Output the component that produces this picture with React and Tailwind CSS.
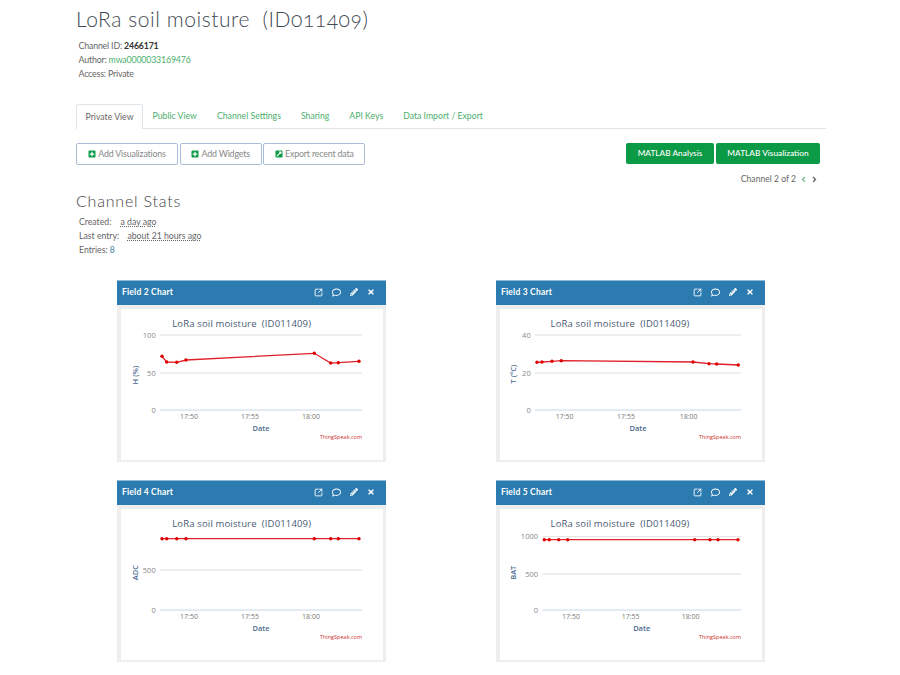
import React from 'react';
import { SquareArrowOutUpRight } from 'lucide-react';
import {
    FaExternalLinkSquareAlt,
    FaPlusSquare,
    FaRegComment,
    FaPencilAlt,
    FaTimes,
    FaAngleLeft,
    FaAngleRight,
} from 'react-icons/fa';

const TITLE = 'LoRa soil moisture\u00a0\u00a0(ID011409)';
const X_LEFT = [41, 45.7, 55.7, 65, 193.3, 209.7, 217.3, 238];

const charts = [
    {
        name: 'Field 2 Chart',
        yTitle: 'H (%)',
        yTitleX: 14.7,
        yTitleY: 66,
        left: 39,
        labelX: 34.7,
        grid: [[26, '100'], [64, '50'], [101, '0']],
        points: [[41, 47.3], [45.7, 53], [55.7, 53.3], [65, 51], [193.3, 44.3], [209.7, 54], [217.3, 53.7], [238, 52.3]],
        ticks: [68, 129, 190],
        dateX: 140,
        titleX: 120.7,
    },
    {
        name: 'Field 3 Chart',
        yTitle: 'T (\u00b0C)',
        yTitleX: 14,
        yTitleY: 65,
        left: 35,
        labelX: 30.7,
        grid: [[26, '40'], [64, '20'], [101, '0']],
        points: [[37, 53.3], [42, 53], [52, 52.3], [61.3, 51.7], [193, 53], [209, 54.7], [216.7, 55], [238.3, 56]],
        ticks: [64.7, 126, 188.7],
        dateX: 138,
        titleX: 120,
    },
    {
        name: 'Field 4 Chart',
        yTitle: 'ADC',
        yTitleX: 14.7,
        yTitleY: 63.7,
        left: 39,
        labelX: 34.7,
        grid: [[61, '500'], [101, '0']],
        points: X_LEFT.map((x) => [x, 29.7]),
        ticks: [68, 129, 190],
        dateX: 140,
        titleX: 120.7,
    },
    {
        name: 'Field 5 Chart',
        yTitle: 'BAT',
        yTitleX: 14,
        yTitleY: 63.7,
        left: 42.7,
        labelX: 38,
        grid: [[27.7, '1000'], [65, '500'], [101, '0']],
        points: [44.3, 49.3, 58.7, 67.7, 194.7, 210, 218, 238].map((x) => [x, 30.7]),
        ticks: [71, 130.7, 190.7],
        dateX: 141.7,
        titleX: 120,
    },
];

const tabs = ['Public View', 'Channel Settings', 'Sharing', 'API Keys', 'Data Import / Export'];

const ChartPlot = ({ chart }) => (
    <svg viewBox="0 0 262 151" className="block w-[262px] h-[151px]" style={{ fontFamily: '"Open Sans", sans-serif' }}>
        <text x={chart.titleX} y="17.5" textAnchor="middle" fontSize="9.5" letterSpacing="0.15" fill="#4a5a75">
            {TITLE}
        </text>
        {chart.grid.map(([y, label]) => (
            <g key={label}>
                <line x1={chart.left} x2="241" y1={y} y2={y} stroke={label === '0' ? '#c6d6e8' : '#dedede'} strokeWidth="1" />
                <text x={chart.labelX} y={y + 2.5} textAnchor="end" fontSize="7.5" fill="#888">{label}</text>
            </g>
        ))}
        {chart.ticks.map((x, i) => (
            <text key={x} x={x} y="109.5" textAnchor="middle" fontSize="7" fill="#777">
                {['17:50', '17:55', '18:00'][i]}
            </text>
        ))}
        <text x={chart.dateX} y="121.5" textAnchor="middle" fontSize="7.5" fontWeight="600" fill="#4d6a92">Date</text>
        <text
            x={chart.yTitleX}
            y={chart.yTitleY}
            textAnchor="middle"
            fontSize="7.5"
            fontWeight="600"
            fill="#4d6a92"
            transform={`rotate(-90 ${chart.yTitleX} ${chart.yTitleY})`}
            dominantBaseline="middle"
        >
            {chart.yTitle}
        </text>
        <text x="241" y="130" textAnchor="end" fontSize="5.5" fill="#cc3333">ThingSpeak.com</text>
        <polyline points={chart.points.map((p) => p.join(',')).join(' ')} fill="none" stroke="#e0202a" strokeWidth="1.3" />
        {chart.points.map(([x, y]) => (
            <circle key={x} cx={x} cy={y} r="1.7" fill="#dd0000" />
        ))}
    </svg>
);

const HeaderIcon = ({ children }) => (
    <span className="w-[17.5px] flex items-center justify-center">{children}</span>
);

const ChartCard = ({ chart }) => (
    <div className="w-[269px] h-[182px] bg-[#eeeeee] flex flex-col">
        <div className="h-[25px] bg-[#2c7bb0] flex items-center justify-between pl-[5px] pr-[6px] pb-[2px] text-white border-t border-[#8fbbd8]">
            <span className="text-[8.5px] font-bold tracking-[0.2px]">{chart.name}</span>
            <div className="flex items-center text-[8px]">
                <HeaderIcon><SquareArrowOutUpRight size={9} strokeWidth={2.4} /></HeaderIcon>
                <HeaderIcon><FaRegComment className="text-[9px]" /></HeaderIcon>
                <HeaderIcon><FaPencilAlt /></HeaderIcon>
                <HeaderIcon><FaTimes /></HeaderIcon>
            </div>
        </div>
        <div className="mt-[4px] ml-[4px] mr-[3px] bg-white">
            <ChartPlot chart={chart} />
        </div>
    </div>
);

const OutlineButton = ({ icon, label, className }) => (
    <button className={`h-[22px] flex items-center justify-center gap-[2px] rounded-[2px] border border-[#a9bdd6] text-[8.8px] tracking-[-0.15px] text-[#888] ${className}`}>
        {icon}
        {label}
    </button>
);

export default function App() {
    return (
        <div className="w-[900px] h-[675px] bg-white overflow-hidden pl-[76px] pr-[74px] text-[#666]" style={{ fontFamily: 'Lato, sans-serif' }}>
            <h1 className="pt-[7px] h-[39px] text-[21px] leading-[24px] font-light tracking-[0.56px] text-[#3f4a52] whitespace-pre [font-feature-settings:'onum']">
                LoRa soil moisture{'  '}(ID011409)
            </h1>

            <div className="pl-[2.5px] text-[8.8px] tracking-[-0.17px] leading-[14px]">
                <p>Channel ID: <b className="text-[#333]">2466171</b></p>
                <p>Author: <span className="text-[#4caf6d]">mwa0000033169476</span></p>
                <p>Access: Private</p>
            </div>

            <div className="mt-[23px] flex border-b border-[#dde5ea] h-[25px] text-[8.7px]">
                <div className="w-[67px] h-[25px] flex items-center justify-center bg-white border border-b-0 border-[#dde5ea] rounded-t-[3px] text-[#666]">
                    Private View
                </div>
                <div className="flex items-center gap-[20px] pl-[9.5px] text-[#4caf6d]">
                    {tabs.map((tab) => (
                        <span key={tab}>{tab}</span>
                    ))}
                </div>
            </div>

            <div className="mt-[14px] flex items-start justify-between pr-[6px]">
                <div className="flex gap-[1.7px]">
                    <OutlineButton className="w-[102px]" icon={<FaPlusSquare className="text-[#0b9a45] text-[8px]" />} label="Add Visualizations" />
                    <OutlineButton className="w-[82px]" icon={<FaPlusSquare className="text-[#0b9a45] text-[8px]" />} label="Add Widgets" />
                    <OutlineButton className="w-[102px]" icon={<FaExternalLinkSquareAlt className="text-[#0b9a45] text-[8px]" />} label="Export recent data" />
                </div>
                <div className="flex gap-[2px] text-white text-[8.3px] font-medium">
                    <button className="w-[88px] h-[21px] bg-[#0b9a45] rounded-[2px]">MATLAB Analysis</button>
                    <button className="w-[104px] h-[21px] bg-[#0b9a45] rounded-[2px]">MATLAB Visualization</button>
                </div>
            </div>

            <div className="mt-[8px] pr-[7px] flex items-center justify-end gap-[3px] text-[8.6px] h-[12px]">
                <span>Channel 2 of 2</span>
                <FaAngleLeft className="text-[#7fb98f] text-[9px]" />
                <FaAngleRight className="ml-[-1px] text-[#666] text-[9px]" />
            </div>

            <h2 className="mt-[6px] text-[16px] leading-[20px] font-light tracking-[0.8px] text-[#444]">Channel Stats</h2>

            <div className="mt-[4px] pl-[3px] text-[8.7px] leading-[14px]">
                <p>Created: <span className="ml-[7px] underline decoration-dotted">a day ago</span></p>
                <p>Last entry: <span className="ml-[6px] underline decoration-dotted">about 21 hours ago</span></p>
                <p>Entries: <span className="text-[#3f7fa6]">8</span></p>
            </div>

            <div className="mt-[23px] ml-[41px] grid grid-cols-[269px_269px] gap-x-[110px] gap-y-[18px]">
                {charts.map((chart) => (
                    <ChartCard key={chart.name} chart={chart} />
                ))}
            </div>
        </div>
    );
}
